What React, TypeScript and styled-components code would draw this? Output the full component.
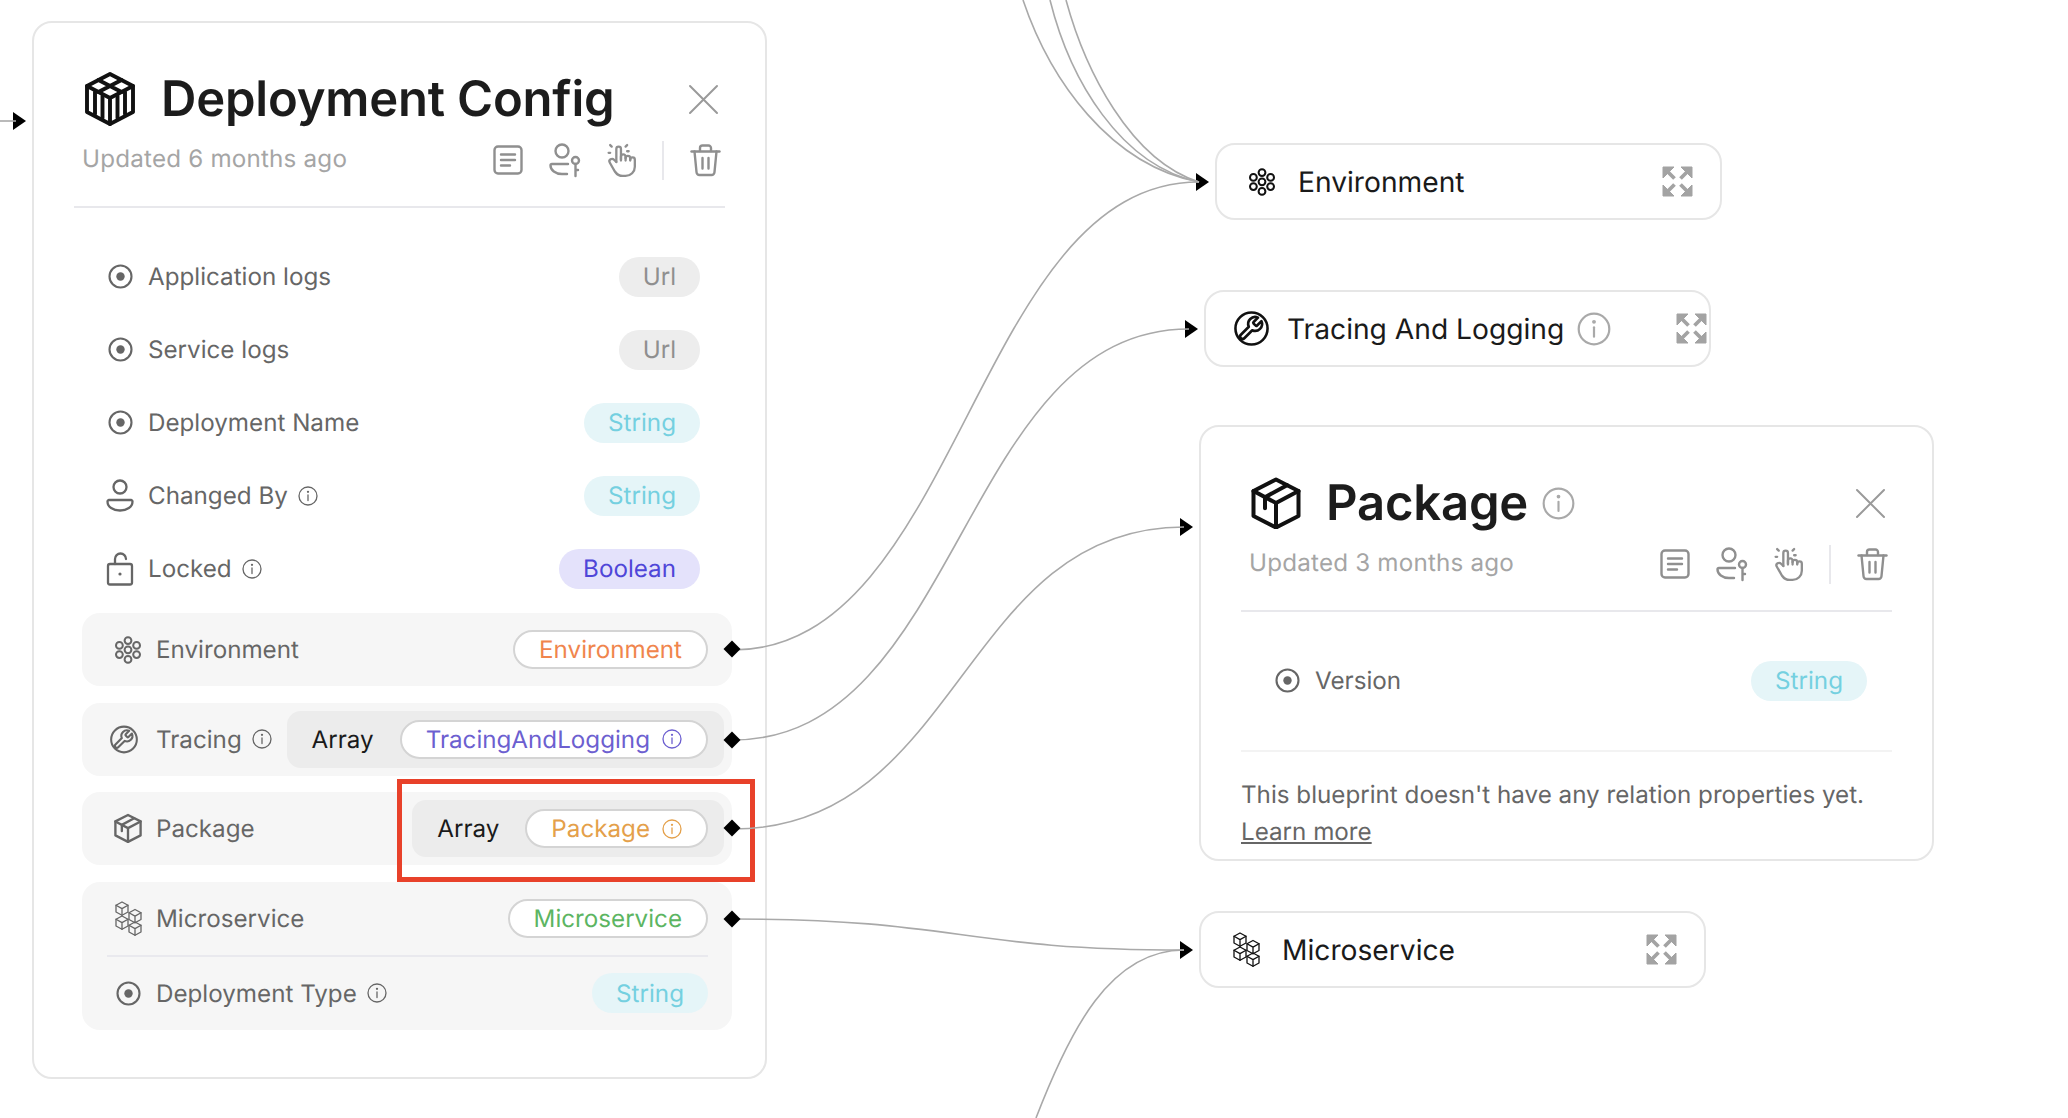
import React from "react";
import styled, { createGlobalStyle } from "styled-components";
import { TbHandClick } from "react-icons/tb";

const GlobalStyle = createGlobalStyle`
  html, body {
    margin: 0;
    height: 100%;
    background: #fff;
    overflow: hidden;
  }
  body {
    font-family: Inter, "Noto Sans", sans-serif;
    font-size: 24.2px;
    color: #666;
    text-rendering: geometricPrecision;
  }
`;

type IconProps = { size?: number };

const line = {
  fill: "none",
  stroke: "currentColor",
  strokeLinecap: "round" as const,
  strokeLinejoin: "round" as const,
};

function InfoIcon({ size = 20 }: IconProps) {
  return (
    <svg width={size} height={size} viewBox="0 0 20 20" {...line} strokeWidth={1.3}>
      <circle cx="10" cy="10" r="9" />
      <path d="M10 9v5.5" />
      <circle cx="10" cy="5.8" r="0.5" fill="currentColor" />
    </svg>
  );
}

function RadioIcon() {
  return (
    <svg width={25} height={25} viewBox="0 0 25 25" {...line} strokeWidth={2.1}>
      <circle cx="12.5" cy="12.5" r="11" />
      <circle cx="12.5" cy="12.5" r="4.2" fill="currentColor" stroke="none" />
    </svg>
  );
}

function PersonIcon() {
  return (
    <svg width={28} height={33} viewBox="0 0 28 33" {...line} strokeWidth={2.3}>
      <circle cx="14" cy="8" r="6.5" />
      <path d="M3 21h22a1.5 1.5 0 0 1 1.5 1.5c0 5.5-5.5 9-12.5 9s-12.5-3.5-12.5-9A1.5 1.5 0 0 1 3 21z" />
    </svg>
  );
}

function LockIcon() {
  return (
    <svg width={28} height={34} viewBox="0 0 28 34" {...line} strokeWidth={2.3}>
      <rect x="2" y="12" width="24" height="20.5" rx="2" />
      <path d="M9 12V7a5.5 5.5 0 0 1 11 0" />
      <circle cx="14" cy="22" r="1.6" fill="currentColor" stroke="none" />
    </svg>
  );
}

function FlowerIcon() {
  const spots = [
    [14, 14],
    [14, 4.8],
    [22.6, 9.6],
    [22.6, 18.8],
    [14, 23.6],
    [5.4, 18.8],
    [5.4, 9.6],
  ];
  return (
    <svg width={28} height={30} viewBox="0 0 28 28.4" {...line} strokeWidth={2}>
      {spots.map(([x, y]) => (
        <circle key={`${x}-${y}`} cx={x} cy={y} r="3.4" />
      ))}
    </svg>
  );
}

function WrenchIcon() {
  return (
    <svg width={35} height={35} viewBox="0 0 34 34" {...line} strokeWidth={2.5}>
      <circle cx="17" cy="17" r="15.6" />
      <g transform="translate(2.6 3.6) scale(1.12)" strokeWidth={2.3}>
        <path d="M14.7 6.3a1 1 0 0 0 0 1.4l1.6 1.6a1 1 0 0 0 1.4 0l3.77-3.77a6 6 0 0 1-7.94 7.94l-6.91 6.91a2.12 2.12 0 0 1-3-3l6.91-6.91a6 6 0 0 1 7.94-7.94l-3.76 3.76z" />
      </g>
    </svg>
  );
}

function BoxIcon({ size = 31 }: IconProps) {
  return (
    <svg width={size} height={size * 1.05} viewBox="0 0 50 52.5" {...line} strokeWidth={size > 40 ? 4 : 4.2}>
      <path d="M25 2.5 47.500 14v25L25 50.500 2.500 39V14z" />
      <path d="M2.500 14 25 26l22.500-12M25 26v24.500" />
      <path d="M36 8.200 14 20.200v11" />
    </svg>
  );
}

function CrateIcon() {
  return (
    <svg width={52} height={54} viewBox="0 0 52 54" {...line} strokeWidth={3.9}>
      <path d="M26 2 49 14v26L26 52 3 40V14z" />
      <path d="M3 14l23 12 23-12M26 26v26" />
      <path d="M14.500 8 37.500 20M37.500 8 14.500 20" />
      <path d="M11 20v22M18.500 24v22M33.500 24v22M41 20v22" />
    </svg>
  );
}

function Cube({ x, y }: { x: number; y: number }) {
  return (
    <g transform={`translate(${x} ${y})`}>
      <path d="M6 0l6 3.300v6.700l-6 3.300-6-3.300V3.300z" />
      <path d="M0 3.300l6 3.300 6-3.300M6 6.600v6.700" />
    </g>
  );
}

function CubesIcon() {
  return (
    <svg width={27} height={35} viewBox="0 0 27 35" {...line} strokeWidth={1.3}>
      <Cube x={1} y={1} />
      <Cube x={14} y={8.500} />
      <Cube x={1} y={15} />
      <Cube x={14} y={21} />
    </svg>
  );
}

function ExpandIcon() {
  return (
    <svg width={31} height={31} viewBox="0 0 31 31" fill="currentColor" stroke="currentColor" strokeWidth={1}>
      <path d="M1 1h11L1 12z" />
      <path d="M30 1H19l11 11z" />
      <path d="M1 30h11L1 19z" />
      <path d="M30 30H19l11-11z" />
      <path d="M4 4l8.500 8.500M27 4l-8.500 8.500M4 27l8.500-8.500M27 27l-8.500-8.500" fill="none" strokeWidth={3.8} />
    </svg>
  );
}

function CloseIcon() {
  return (
    <svg width={31} height={31} viewBox="0 0 31 31" {...line} strokeWidth={2}>
      <path d="M2 2l27 27M29 2 2 29" />
    </svg>
  );
}

function DocIcon() {
  return (
    <svg width={30} height={30} viewBox="0 0 30 30" {...line} strokeWidth={2.4}>
      <rect x="1.500" y="1.500" width="27" height="27" rx="3.500" />
      <path d="M8 9.500h14M8 15h14M8 20.500h9" />
    </svg>
  );
}

function PersonKeyIcon() {
  return (
    <svg width={32} height={35} viewBox="0 0 32 35" {...line} strokeWidth={2.4}>
      <circle cx="13" cy="8" r="6.500" />
      <path d="M19 21H3a1.500 1.500 0 0 0-1.500 1.500C1.500 27 6.500 31 13 31h5" />
      <circle cx="26.500" cy="17.500" r="3.500" />
      <path d="M26.500 21v12M26.500 27h2.500" />
    </svg>
  );
}

function TrashIcon() {
  return (
    <svg width={31} height={33} viewBox="0 0 31 33" {...line} strokeWidth={2.4}>
      <path d="M1.500 7.500h28" />
      <path d="M10 7V4a2.500 2.500 0 0 1 2.500-2.500h6A2.500 2.500 0 0 1 21 4v3" />
      <path d="M4.500 7.500 6.500 28a3 3 0 0 0 3 3h12a3 3 0 0 0 3-3l2-20.500" />
      <path d="M12.500 14v10.500M18.500 14v10.500" />
    </svg>
  );
}

const Canvas = styled.div`
  position: relative;
  width: 2068px;
  height: 1118px;
  overflow: hidden;
  background: #fff;
`;

const Edges = styled.svg`
  position: absolute;
  inset: 0;
  z-index: 1;
  pointer-events: none;
`;

const Node = styled.div<{ $x: number; $y: number; $w: number }>`
  position: absolute;
  left: ${(p) => p.$x}px;
  top: ${(p) => p.$y}px;
  width: ${(p) => p.$w}px;
  box-sizing: border-box;
  background: #fff;
  border: 2px solid #e6e6e6;
  border-radius: 20px;
`;

const Arrow = styled.div<{ $top?: number }>`
  position: absolute;
  left: -21px;
  top: ${(p) => (p.$top !== undefined ? `${p.$top}px` : "50%")};
  margin-top: -9px;
  width: 0;
  height: 0;
  border-style: solid;
  border-width: 9px 0 9px 13px;
  border-color: transparent transparent transparent #000;
`;

const ExpandedBody = styled.div`
  padding: 49px 40px 0;
`;

const TitleRow = styled.div`
  display: flex;
  align-items: center;
  height: 54px;
  padding: 0 6px 0 10px;
  color: #111;
`;

const Title = styled.h1`
  margin: 0 14px 0 25px;
  font-size: 49px;
  line-height: 54px;
  font-weight: 600;
  letter-spacing: -0.2px;
  color: #1c1c1c;
`;

const TitleInfo = styled.span`
  display: flex;
  color: #a9a9a9;
`;

const CloseButton = styled.span`
  display: flex;
  margin-left: auto;
  color: #9a9a9a;
`;

const SubRow = styled.div`
  display: flex;
  align-items: center;
  height: 44px;
  margin-top: 12px;
  padding: 0 4px 0 8px;
`;

const Updated = styled.span`
  color: #a5a5a5;
  margin-top: -4px;
  letter-spacing: 0.2px;
`;

const Actions = styled.div`
  display: flex;
  align-items: center;
  gap: 26px;
  margin-left: auto;
  color: #8f8f8f;
`;

const HandSlot = styled.span`
  display: flex;
  margin: 0 -5px 0 -3px;
`;

const ActionSep = styled.span`
  width: 2px;
  height: 39px;
  background: #e8e8ec;
`;

const Divider = styled.div`
  height: 2px;
  background: #e8e8ec;
`;

const HeaderLine = styled(Divider)`
  margin-top: 24px;
`;

const FooterLine = styled(Divider)`
  margin-top: 33px;
  background: #f3f3f3;
`;

const FieldList = styled.div`
  margin-top: 32px;
`;

const FieldRow = styled.div`
  display: flex;
  align-items: center;
  height: 73px;
  padding: 0 25px 0 32px;
`;

const IconSlot = styled.span<{ $nudge?: number }>`
  display: flex;
  justify-content: center;
  flex: 0 0 28px;
  min-width: 0;
  margin-right: 14px;
  color: #666;
  transform: translateX(${(p) => p.$nudge ?? 0}px);
`;

const Label = styled.span`
  display: flex;
  align-items: center;
  gap: 10px;
  color: #666;
`;

const TypeChip = styled.span<{ $bg: string; $fg: string }>`
  display: flex;
  align-items: center;
  height: 40px;
  padding: 0 24px;
  margin-left: auto;
  border-radius: 20px;
  background: ${(p) => p.$bg};
  color: ${(p) => p.$fg};
`;

const Relations = styled.div`
  display: flex;
  flex-direction: column;
  gap: 16.500px;
  margin: 8px -7px 47px 8px;
`;

const Group = styled.div`
  position: relative;
  background: #f6f6f6;
  border-radius: 18px;
`;

const GroupRow = styled.div`
  display: flex;
  align-items: center;
  height: 73px;
  padding: 0 8px 0 32px;
`;

const GroupLine = styled.div`
  height: 2px;
  margin: 0 24px 0 25px;
  background: #e9e9ee;
`;

const TypeEnd = styled.div`
  display: flex;
  margin-left: auto;
  padding-right: 16px;
`;

const ArrayBox = styled.div`
  display: flex;
  align-items: center;
  gap: 26px;
  height: 57px;
  margin-left: auto;
  padding: 0 16px 0 25px;
  background: #ececec;
  border-radius: 14px;
  color: #1a1a1a;
`;

const RefPill = styled.span<{ $fg: string }>`
  display: flex;
  align-items: center;
  gap: 12px;
  height: 39px;
  box-sizing: border-box;
  padding: 0 24px;
  background: #fff;
  border: 2px solid #d4d4d4;
  border-radius: 20px;
  color: ${(p) => p.$fg};
`;

const Handle = styled.span<{ $top: number }>`
  position: absolute;
  right: -6px;
  top: ${(p) => p.$top}px;
  width: 12px;
  height: 12px;
  background: #000;
  transform: rotate(45deg);
  z-index: 2;
`;

const Note = styled.p`
  margin: 24px 0 9px;
  line-height: 37px;
  color: #666;
`;

const NoteLink = styled.a`
  color: #666;
  text-decoration: underline;
`;

const CollapsedRow = styled.div<{ $tight?: boolean }>`
  display: flex;
  align-items: center;
  height: 73px;
  padding: 0 ${(p) => (p.$tight ? 2 : 27)}px 0 14px;
  font-size: 28.2px;
  color: #1a1a1a;
`;

const CollapsedIcon = styled.span`
  display: flex;
  justify-content: center;
  flex: 0 0 62px;
  margin-right: 5px;
  color: #111;
`;

const CollapsedInfo = styled.span`
  display: flex;
  margin-left: 13px;
  color: #a9a9a9;
`;

const ExpandButton = styled.span`
  display: flex;
  margin-left: auto;
  color: #a3a3a3;
`;

const Highlight = styled.div`
  position: absolute;
  left: 397px;
  top: 779px;
  width: 358px;
  height: 103px;
  box-sizing: border-box;
  border: 5px solid #e8412a;
  pointer-events: none;
`;

const URL_CHIP = { $bg: "#ededed", $fg: "#8f8f8f" };
const STRING_CHIP = { $bg: "#e5f5f8", $fg: "#74d0e0" };
const BOOL_CHIP = { $bg: "#e4e2fb", $fg: "#4f46d8" };

function CardHeader({ title, icon, info, updated }: { title: string; icon: React.ReactNode; info?: boolean; updated: string }) {
  return (
    <>
      <TitleRow>
        {icon}
        <Title>{title}</Title>
        {info && (
          <TitleInfo>
            <InfoIcon size={33} />
          </TitleInfo>
        )}
        <CloseButton>
          <CloseIcon />
        </CloseButton>
      </TitleRow>
      <SubRow>
        <Updated>{updated}</Updated>
        <Actions>
          <DocIcon />
          <PersonKeyIcon />
          <HandSlot>
            <TbHandClick size={37} strokeWidth={1.5} />
          </HandSlot>
          <ActionSep />
          <TrashIcon />
        </Actions>
      </SubRow>
      <HeaderLine />
    </>
  );
}

function Field({ icon, label, info, chip, text }: { icon: React.ReactNode; label: string; info?: boolean; chip: { $bg: string; $fg: string }; text: string }) {
  return (
    <FieldRow>
      <IconSlot>{icon}</IconSlot>
      <Label>
        {label}
        {info && <InfoIcon />}
      </Label>
      <TypeChip {...chip}>{text}</TypeChip>
    </FieldRow>
  );
}

function Collapsed({ x, y, w, icon, name, info, tight }: { x: number; y: number; w: number; icon: React.ReactNode; name: string; info?: boolean; tight?: boolean }) {
  return (
    <Node $x={x} $y={y} $w={w}>
      <Arrow />
      <CollapsedRow $tight={tight}>
        <CollapsedIcon>{icon}</CollapsedIcon>
        {name}
        {info && (
          <CollapsedInfo>
            <InfoIcon size={34} />
          </CollapsedInfo>
        )}
        <ExpandButton>
          <ExpandIcon />
        </ExpandButton>
      </CollapsedRow>
    </Node>
  );
}

export default function App() {
  return (
    <Canvas>
      <GlobalStyle />
      <Edges width={2068} height={1118} fill="none" stroke="#a9a9a9" strokeWidth={1.6}>
        <path d="M0 121H16" />
        <path d="M733 650C960 650 975 182 1199 182" />
        <path d="M733 740C961 740 961 329 1189 329" />
        <path d="M733 829C961 829 961 527 1184 527" />
        <path d="M733 919C960 919 960 950 1184 950" />
        <path d="M1023 0C1050 80 1110 165 1199 182" />
        <path d="M1050 0C1070 80 1120 165 1199 182" />
        <path d="M1066 0C1085 70 1130 160 1199 182" />
        <path d="M1036 1118C1070 1030 1110 950 1184 950" />
      </Edges>

      <Node $x={32} $y={21} $w={735}>
        <Arrow $top={98} />
        <ExpandedBody>
          <CardHeader title="Deployment Config" icon={<CrateIcon />} updated="Updated 6 months ago" />
          <FieldList>
            <Field icon={<RadioIcon />} label="Application logs" chip={URL_CHIP} text="Url" />
            <Field icon={<RadioIcon />} label="Service logs" chip={URL_CHIP} text="Url" />
            <Field icon={<RadioIcon />} label="Deployment Name" chip={STRING_CHIP} text="String" />
            <Field icon={<PersonIcon />} label="Changed By" info chip={STRING_CHIP} text="String" />
            <Field icon={<LockIcon />} label="Locked" info chip={BOOL_CHIP} text="Boolean" />
          </FieldList>
          <Relations>
            <Group>
              <GroupRow>
                <IconSlot>
                  <FlowerIcon />
                </IconSlot>
                <Label>Environment</Label>
                <TypeEnd>
                  <RefPill $fg="#f0854d">Environment</RefPill>
                </TypeEnd>
              </GroupRow>
              <Handle $top={30} />
            </Group>
            <Group>
              <GroupRow>
                <IconSlot $nudge={-4}>
                  <WrenchIcon />
                </IconSlot>
                <Label>
                  Tracing
                  <InfoIcon />
                </Label>
                <ArrayBox>
                  Array
                  <RefPill $fg="#6c5fd0">
                    TracingAndLogging
                    <InfoIcon />
                  </RefPill>
                </ArrayBox>
              </GroupRow>
              <Handle $top={31} />
            </Group>
            <Group>
              <GroupRow>
                <IconSlot>
                  <BoxIcon />
                </IconSlot>
                <Label>Package</Label>
                <ArrayBox>
                  Array
                  <RefPill $fg="#e4a04a">
                    Package
                    <InfoIcon />
                  </RefPill>
                </ArrayBox>
              </GroupRow>
              <Handle $top={30} />
            </Group>
            <Group>
              <GroupRow>
                <IconSlot>
                  <CubesIcon />
                </IconSlot>
                <Label>Microservice</Label>
                <TypeEnd>
                  <RefPill $fg="#5cb562">Microservice</RefPill>
                </TypeEnd>
              </GroupRow>
              <GroupLine />
              <GroupRow>
                <IconSlot>
                  <RadioIcon />
                </IconSlot>
                <Label>
                  Deployment Type
                  <InfoIcon />
                </Label>
                <TypeEnd>
                  <TypeChip {...STRING_CHIP}>String</TypeChip>
                </TypeEnd>
              </GroupRow>
              <Handle $top={31} />
            </Group>
          </Relations>
        </ExpandedBody>
      </Node>

      <Collapsed x={1215} y={143} w={507} icon={<FlowerIcon />} name="Environment" />
      <Collapsed x={1204} y={290} w={507} icon={<WrenchIcon />} name="Tracing And Logging" info tight />

      <Node $x={1199} $y={425} $w={735}>
        <Arrow $top={100} />
        <ExpandedBody>
          <CardHeader title="Package" icon={<BoxIcon size={50} />} info updated="Updated 3 months ago" />
          <FieldList>
            <Field icon={<RadioIcon />} label="Version" chip={STRING_CHIP} text="String" />
          </FieldList>
          <FooterLine />
          <Note>
            This blueprint doesn't have any relation properties yet.
            <br />
            <NoteLink>Learn more</NoteLink>
          </Note>
        </ExpandedBody>
      </Node>

      <Collapsed x={1199} y={911} w={507} icon={<CubesIcon />} name="Microservice" />

      <Highlight />
    </Canvas>
  );
}
